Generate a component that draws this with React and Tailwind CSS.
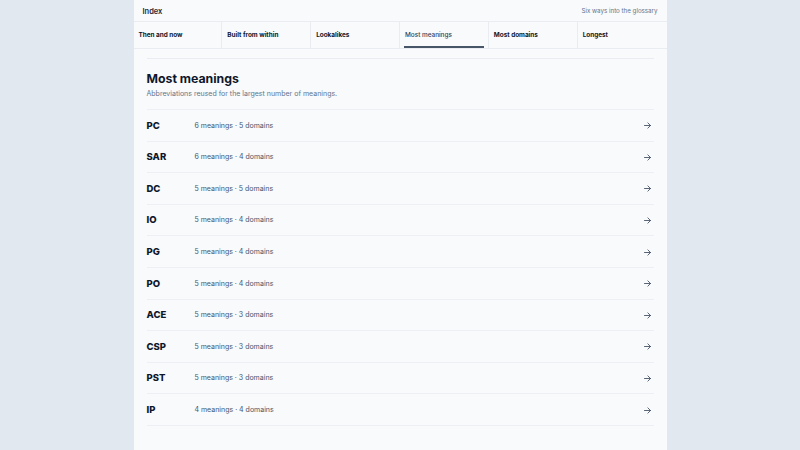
import React from 'react';

const tabs = ['Then and now', 'Built from within', 'Lookalikes', 'Most meanings', 'Most domains', 'Longest'];

const rows = [
  ['PC', '6 meanings · 5 domains'],
  ['SAR', '6 meanings · 4 domains'],
  ['DC', '5 meanings · 5 domains'],
  ['IO', '5 meanings · 4 domains'],
  ['PG', '5 meanings · 4 domains'],
  ['PO', '5 meanings · 4 domains'],
  ['ACE', '5 meanings · 3 domains'],
  ['CSP', '5 meanings · 3 domains'],
  ['PST', '5 meanings · 3 domains'],
  ['IP', '4 meanings · 4 domains'],
];

function Arrow() {
  return (
    <svg width="9" height="9" viewBox="0 0 24 24" fill="none" stroke="currentColor" strokeWidth="2.4" strokeLinecap="round" strokeLinejoin="round">
      <path d="M4 12h16" />
      <path d="M13 5l7 7-7 7" />
    </svg>
  );
}

export default function App() {
  return (
    <div className="min-h-[450px] bg-[#e2e8f0] font-['Inter',sans-serif] text-[#0f172a]">
      <div className="mx-auto w-[533px] min-h-[450px] bg-[#f8fafc]">
        <div className="flex h-[22px] items-center justify-between border-b border-[#e9edf2] px-[9px] pt-[2px] leading-none">
          <span className="text-[7.5px] font-semibold text-[#1e293b]">Index</span>
          <span className="text-[6.2px] text-[#64748b]">Six ways into the glossary</span>
        </div>
        <div className="grid h-[27px] grid-cols-6 border-b border-[#e9edf2]">
          {tabs.map((t, i) => (
            <div
              key={t}
              className={`relative flex items-center px-[5px] pt-[2px] text-[6.4px] ${i < 5 ? 'border-r border-[#e9edf2]' : ''} ${
                t === 'Most meanings' ? 'font-medium text-[#334155]' : 'font-bold text-[#0f172a]'
              }`}
            >
              {t}
              {t === 'Most meanings' && <span className="absolute bottom-0 left-[4px] right-[4px] h-[2px] bg-[#475569]" />}
            </div>
          ))}
        </div>
        <div className="mx-[13px] mt-[9px] border-t border-[#e9edf2] pt-[11px]">
          <h2 className="text-[12.3px] font-bold leading-[18px] text-[#0f172a]">Most meanings</h2>
          <p className="mt-[1px] text-[7px] leading-[10px] text-[#64748b]">Abbreviations reused for the largest number of meanings.</p>
          <div className="mt-[10px] border-t border-[#eceff3]">
            {rows.map(([a, d]) => (
              <div key={a} className="flex h-[31.6px] items-center border-b border-[#eceff3] pt-[1px]">
                <span className="w-[48px] text-[9.5px] font-extrabold text-[#0f172a]">{a}</span>
                <span className="flex-1 text-[7px] text-[#475569]">{d}</span>
                <span className="mr-[2px] text-[#475569]"><Arrow /></span>
              </div>
            ))}
          </div>
        </div>
      </div>
    </div>
  );
}
